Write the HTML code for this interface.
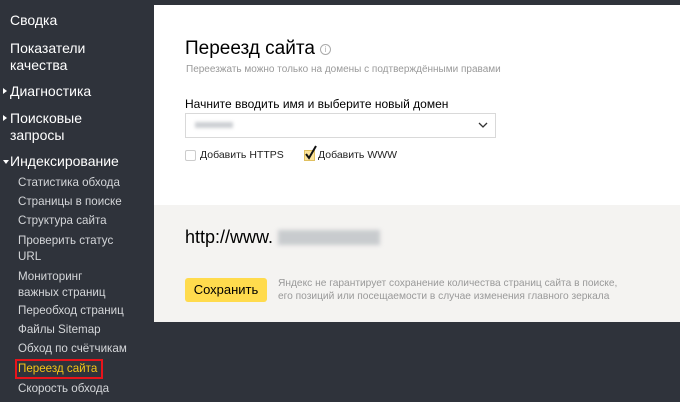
<!DOCTYPE html><html><head><meta charset="utf-8"><style>
*{margin:0;padding:0;box-sizing:border-box}
body{width:680px;height:402px;background:#2f333b;font-family:"Liberation Sans",sans-serif;position:relative;overflow:hidden}
.a{position:absolute;white-space:nowrap}
.t{color:#fff;font-size:14px;left:10px}
.s{color:#d4d6d9;font-size:11.6px;left:18px}
.tri{position:absolute;left:3px;width:0;height:0}
</style></head><body>
<div class="a t" style="top:12px">Сводка</div>
<div class="a t" style="top:40px;line-height:17px">Показатели<br>качества</div>
<div class="tri" style="top:88px;border-left:4px solid #fff;border-top:3px solid transparent;border-bottom:3px solid transparent"></div>
<div class="a t" style="top:83px">Диагностика</div>
<div class="tri" style="top:115px;border-left:4px solid #fff;border-top:3px solid transparent;border-bottom:3px solid transparent"></div>
<div class="a t" style="top:110px;line-height:17px">Поисковые<br>запросы</div>
<div class="tri" style="top:160px;border-top:4px solid #fff;border-left:3px solid transparent;border-right:3px solid transparent"></div>
<div class="a t" style="top:153px">Индексирование</div>
<div class="a s" style="top:176px">Статистика обхода</div>
<div class="a s" style="top:195px">Страницы в поиске</div>
<div class="a s" style="top:214px">Структура сайта</div>
<div class="a s" style="top:233px;line-height:16px">Проверить статус<br>URL</div>
<div class="a s" style="top:269px;line-height:16px">Мониторинг<br>важных страниц</div>
<div class="a s" style="top:304px">Переобход страниц</div>
<div class="a s" style="top:323px">Файлы Sitemap</div>
<div class="a s" style="top:342px">Обход по счётчикам</div>
<div class="a" style="left:15px;top:359px;width:88px;height:20px;border:2px solid #e8141b"></div>
<div class="a s" style="top:362px;color:#f5c518">Переезд сайта</div>
<div class="a s" style="top:382px">Скорость обхода</div>

<div class="a" style="left:154px;top:5px;width:526px;height:200px;background:#fff"></div>
<div class="a" style="left:154px;top:205px;width:526px;height:117px;background:#f4f3f1"></div>
<div class="a" style="left:185px;top:38px;font-size:19px;color:#000">Переезд сайта <span style="display:inline-block;width:11px;height:11px;border:1px solid #aaa;border-radius:50%;font-size:8px;color:#aaa;text-align:center;line-height:9px;vertical-align:2px">i</span></div>
<div class="a" style="left:186px;top:64px;font-size:10px;color:#999">Переезжать можно только на домены с подтверждёнными правами</div>
<div class="a" style="left:185px;top:97px;font-size:12px;color:#000">Начните вводить имя и выберите новый домен</div>
<div class="a" style="left:185px;top:113px;width:311px;height:25px;border:1px solid #d9d9d9"></div>
<div class="a" style="left:195px;top:122px;width:38px;height:6px;background:#cdd0d4;filter:blur(1.5px)"></div>
<svg class="a" style="left:478px;top:121px" width="10" height="8"><path d="M1 2l4 4 4-4" stroke="#333" stroke-width="1.3" fill="none"/></svg>
<div class="a" style="left:185px;top:150px;width:11px;height:11px;border:1px solid #ccc;border-radius:2px"></div>
<div class="a" style="left:200px;top:149px;font-size:10.5px;color:#222">Добавить HTTPS</div>
<div class="a" style="left:304px;top:150px;width:11px;height:11px;background:#fbe39a;border:1px solid #e0c060"></div>
<svg class="a" style="left:304px;top:144px" width="14" height="18"><path d="M2 10l3 4 7-12" stroke="#111" stroke-width="2" fill="none"/></svg>
<div class="a" style="left:318px;top:149px;font-size:10.5px;color:#222">Добавить WWW</div>
<div class="a" style="left:185px;top:227px;font-size:18px;color:#000">http://www.</div>
<div class="a" style="left:278px;top:230px;width:102px;height:15px;background:#c8cbce;filter:blur(2px)"></div>
<div class="a" style="left:185px;top:278px;width:82px;height:24px;background:#ffdb4d;border-radius:3px;font-size:13px;text-align:center;line-height:24px;color:#000">Сохранить</div>
<div class="a" style="left:278px;top:277px;font-size:10.2px;color:#999;line-height:13px">Яндекс не гарантирует сохранение количества страниц сайта в поиске,<br>его позиций или посещаемости в случае изменения главного зеркала</div>
</body></html>
